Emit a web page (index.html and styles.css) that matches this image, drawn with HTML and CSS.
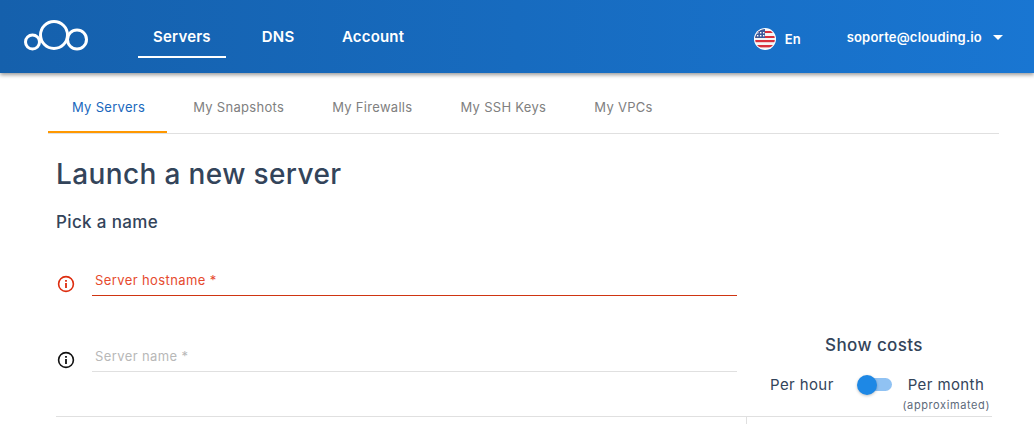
FILE: index.html
```html
<!DOCTYPE html>
<html lang="en">
<head>
<meta charset="utf-8">
<title>Launch a new server</title>
<link rel="stylesheet" href="styles.css">
</head>
<body>
<header class="topbar">
  <svg class="logo" viewBox="0 0 64 32" width="64" height="32" fill="none" stroke="#fff" stroke-width="3">
    <circle cx="8.5" cy="23" r="7"/>
    <circle cx="30" cy="16" r="13.5"/>
    <circle cx="53" cy="20.5" r="9.5"/>
  </svg>
  <nav class="mainnav">
    <a class="mainlink active">Servers</a>
    <a class="mainlink">DNS</a>
    <a class="mainlink">Account</a>
  </nav>
  <div class="lang">
    <svg class="flag" viewBox="0 0 22 22" width="22" height="22">
      <defs><clipPath id="c"><circle cx="11" cy="11" r="10"/></clipPath></defs>
      <circle cx="11" cy="11" r="11" fill="#fff"/>
      <g clip-path="url(#c)">
        <rect x="0" y="1" width="22" height="20" fill="#f5f5f5"/>
        <rect x="0" y="3" width="22" height="2" fill="#d8303c"/>
        <rect x="0" y="8" width="22" height="2" fill="#d8303c"/>
        <rect x="0" y="12" width="22" height="2.2" fill="#d8303c"/>
        <rect x="0" y="17" width="22" height="2.4" fill="#d8303c"/>
        <rect x="0" y="1" width="11" height="9" fill="#3c5a9a"/>
        <rect x="3" y="4" width="1.4" height="1.4" fill="#fff"/>
        <rect x="6" y="4" width="1.4" height="1.4" fill="#fff"/>
        <rect x="9" y="4" width="1.4" height="1.4" fill="#fff"/>
        <rect x="3" y="7" width="1.4" height="1.4" fill="#fff"/>
        <rect x="6" y="7" width="1.4" height="1.4" fill="#fff"/>
        <rect x="9" y="7" width="1.4" height="1.4" fill="#fff"/>
      </g>
    </svg>
    <span>En</span>
  </div>
  <div class="user"><span>soporte@clouding.io</span><i class="caret"></i></div>
</header>

<main class="page">
  <nav class="tabs">
    <a class="tab active">My Servers</a>
    <a class="tab">My Snapshots</a>
    <a class="tab">My Firewalls</a>
    <a class="tab">My SSH Keys</a>
    <a class="tab">My VPCs</a>
  </nav>
  <section class="content">
    <h1 class="title">Launch a new server</h1>
    <h2 class="subtitle">Pick a name</h2>
    <div class="fields">
      <div class="left">
        <div class="field error">
          <svg class="info" viewBox="0 0 18 18" width="18" height="18" fill="none" stroke="currentColor" stroke-width="1.6">
            <circle cx="9" cy="9" r="7.4"/><path d="M9 8v5M9 5v1.8" stroke-width="1.8"/>
          </svg>
          <div class="input">Server hostname *</div>
        </div>
        <div class="field plain">
          <svg class="info" viewBox="0 0 18 18" width="18" height="18" fill="none" stroke="currentColor" stroke-width="1.6">
            <circle cx="9" cy="9" r="7.4"/><path d="M9 8v5M9 5v1.8" stroke-width="1.8"/>
          </svg>
          <div class="input">Server name *</div>
        </div>
      </div>
      <aside class="costs">
        <div class="costs-title">Show costs</div>
        <div class="costs-row">
          <span class="per-hour">Per hour</span>
          <span class="switch"><i class="knob"></i></span>
          <span class="per-month">Per month</span>
        </div>
        <div class="approx">(approximated)</div>
      </aside>
    </div>
    <div class="bottom"><div class="bottom-col"></div></div>
  </section>
</main>
</body>
</html>
```
FILE: styles.css
```css
* { box-sizing: border-box; }
html, body { margin: 0; padding: 0; height: 424px; overflow: hidden; background: #fff; }
body { font-family: Inter, "Liberation Sans", sans-serif; color: #33445a; }

.topbar {
  height: 73px;
  display: flex;
  align-items: flex-start;
  background: linear-gradient(90deg, #1560ac 0%, #1976d2 100%);
  box-shadow: 0 2px 4px rgba(0,0,0,.4);
  position: relative;
  padding-left: 24px;
  color: #fff;
}
.logo { margin-top: 19px; flex: none; }
.mainnav { display: flex; margin-left: 50px; }
.mainlink {
  height: 58px;
  padding: 28px 15px 0;
  font-size: 15px;
  font-weight: 600;
  line-height: 18px;
  letter-spacing: .2px;
  margin-right: 17.5px;
  border-bottom: 2px solid transparent;
}
.mainlink.active { border-bottom-color: #fff; margin-right: 21px; }
.lang {
  margin-left: auto;
  display: flex;
  align-items: center;
  gap: 9px;
  margin-top: 28px;
  height: 22px;
  font-size: 13px;
  font-weight: 600;
}
.user {
  margin-left: 46px;
  margin-right: 31px;
  margin-top: 28px;
  display: flex;
  align-items: center;
  height: 18px;
  font-size: 13px;
  font-weight: 600;
  letter-spacing: .2px;
}
.caret {
  margin-left: 11px;
  width: 0; height: 0;
  border-left: 5px solid transparent;
  border-right: 5px solid transparent;
  border-top: 5px solid #fff;
}

.page { padding: 0 35px 0 48px; }
.tabs { display: flex; height: 61px; border-bottom: 1px solid #e0e0e0; }
.tab {
  padding: 26px 24px 0;
  font-size: 13px;
  font-weight: 400;
  line-height: 16px;
  letter-spacing: .3px;
  color: #808080;
  height: 60px;
}
.tab.active { color: #1a68bd; border-bottom: 2px solid #ff9800; padding-right: 21.5px; margin-right: 2.5px; }

.content { padding-left: 8px; padding-right: 7px; }
.title { margin: 23px 0 0; font-size: 28px; font-weight: 500; line-height: 34px; letter-spacing: .37px; color: #33445a; }
.subtitle { margin: 20px 0 0; font-size: 17px; font-weight: 500; line-height: 22px; letter-spacing: .35px; color: #33445a; }
.fields { display: flex; }
.left { width: 681px; padding-top: 12px; }
.field { display: flex; align-items: flex-end; height: 51px; margin-bottom: 25px; }
.info { flex: none; margin: 0 17px 3px 1px; }
.error { color: #dd2c0e; }
.plain { color: #111; }
.input { flex: 1; height: 30px; padding: 5px 0 0 3px; font-size: 13px; line-height: 18px; letter-spacing: .4px; }
.error .input { color: #e64a2e; border-bottom: 1px solid #cf3512; }
.plain .input { color: #b8b8b8; border-bottom: 1px solid #e0e0e0; }

.costs { flex: 1; padding-top: 102px; }
.costs-title { text-align: center; font-size: 17px; font-weight: 500; line-height: 20px; letter-spacing: .4px; padding-left: 19px; }
.costs-row { display: flex; align-items: center; margin-top: 17px; height: 24px; font-size: 15px; letter-spacing: .4px; }
.per-hour { margin-left: 33px; }
.switch {
  position: relative;
  width: 34px; height: 13px;
  margin: 0 16px 0 24px;
  border-radius: 7px;
  background: #90c2f3;
}
.knob {
  position: absolute;
  left: -1px; top: -3px;
  width: 20px; height: 20px;
  border-radius: 50%;
  background: #1e88e5;
  box-shadow: 0 1px 3px rgba(0,0,0,.25);
}
.approx { text-align: right; font-size: 11px; line-height: 14px; color: #5d6a7a; margin-top: 2px; padding-right: 2px; letter-spacing: .6px; }

.bottom { position: absolute; left: 56px; right: 42px; top: 416px; height: 8px; border-top: 1px solid #e0e0e0; }
.bottom-col { margin-left: 690px; width: 1px; height: 8px; background: #e0e0e0; }
```
